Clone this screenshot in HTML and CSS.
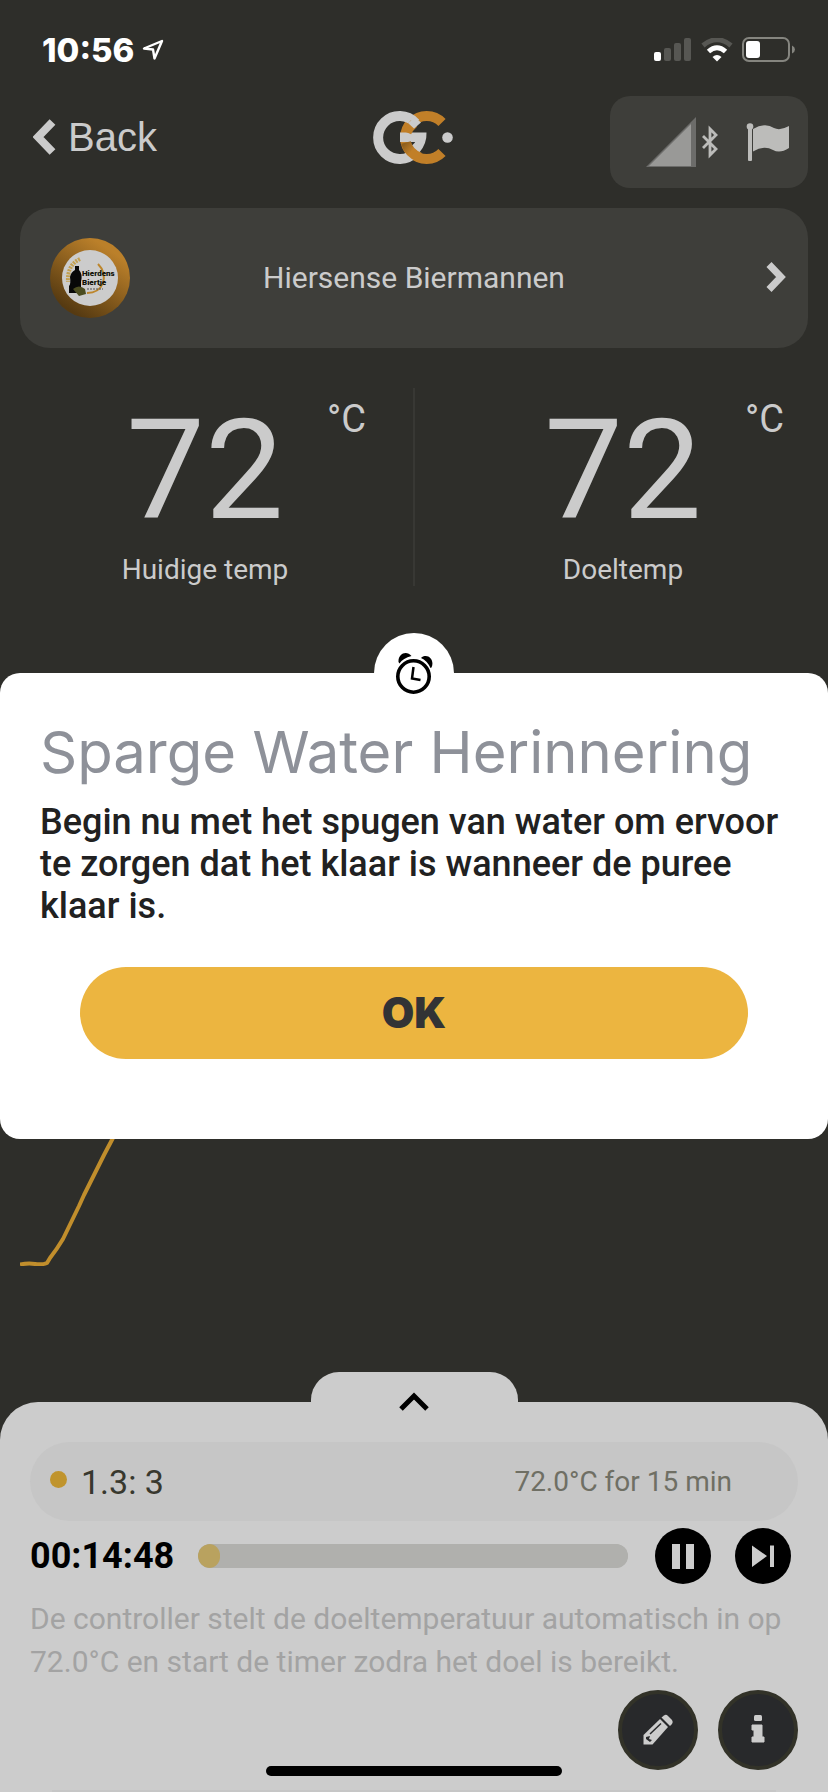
FILE: index.html
```html
<!DOCTYPE html>
<html lang="nl">
<head>
<meta charset="utf-8">
<meta name="viewport" content="width=device-width, initial-scale=1">
<title>Sparge Water Herinnering</title>
<link rel="stylesheet" href="styles.css">
</head>
<body>
<div class="screen">
  <div class="status">
    <div class="status-time">
      <span>10:56</span>
      <svg class="location" width="22" height="22" viewBox="0 0 22 22"><path d="M2 9.500L20 2L12.500 19.500L11 10.500Z" fill="none" stroke="#fff" stroke-width="2.400" stroke-linejoin="round"/></svg>
    </div>
    <div class="status-icons">
      <svg width="38" height="24" viewBox="0 0 38 24"><rect x="0" y="14" width="7" height="9" rx="2" fill="#fff"/><g fill="#575753"><rect x="10" y="10" width="7" height="13" rx="2"/><rect x="20" y="5" width="7" height="18" rx="2"/><rect x="30" y="0" width="7" height="23" rx="2"/></g></svg>
      <svg width="32" height="24" viewBox="0 0 32 24"><path d="M2 7.500Q16 -4 30 7.500" fill="none" stroke="#575753" stroke-width="5"/><path d="M7.500 13.500Q16 6 24.500 13.500" fill="none" stroke="#fff" stroke-width="5"/><path d="M16 23.500L11.500 19Q16 15 20.500 19Z" fill="#fff"/></svg>
      <svg width="54" height="26" viewBox="0 0 54 26"><rect x="1" y="1" width="46" height="23" rx="6" fill="none" stroke="#85857f" stroke-width="2"/><rect x="4" y="4" width="14" height="17" rx="3" fill="#fff"/><path d="M50 8.500Q53 10 53 12.500T50 16.500Z" fill="#85857f"/></svg>
    </div>
  </div>

  <header class="header">
    <a class="back" href="#">
      <svg width="24" height="38" viewBox="0 0 24 38"><path d="M19.500 4L5 19L19.500 34" fill="none" stroke="#cbcbcb" stroke-width="8"/></svg>
      <span>Back</span>
    </a>
    <svg class="logo" width="82" height="64" viewBox="0 0 82 64" role="img" aria-label="GC">
      <defs>
        <linearGradient id="shade" x1="0" y1="0" x2="1" y2="1"><stop offset="0" stop-color="#8f601f"/><stop offset=".5" stop-color="#c17f28"/></linearGradient>
      </defs>
      <path d="M69 12.500A21.500 21.500 0 1 0 69 42.500" fill="none" stroke="#c17f28" stroke-width="10"/>
      <path d="M42.500 13A21.500 21.500 0 1 0 42.500 42" fill="none" stroke="#cbcbcb" stroke-width="10"/>
      <path d="M27 22.500H53.500Q54 34 46 43L38 36Q42 33 42 32H27Z" fill="#cbcbcb"/>
      <path d="M33 32.500A21.500 21.500 0 0 0 47 47.500" fill="none" stroke="url(#shade)" stroke-width="10"/>
      <path d="M41 13.500Q36 18 34 22.500" fill="none" stroke="#c17f28" stroke-width="9"/>
      <path d="M42 7.500L48 12.500L41 18.500L35 13Z" fill="#cbcbcb"/>
      <circle cx="74.500" cy="27.500" r="5.300" fill="#cbcbcb"/>
    </svg>
    <div class="connection">
      <svg width="72" height="52" viewBox="0 0 72 52" role="img" aria-label="Bluetooth signaal"><path d="M0 51L50 1V51Z" fill="#6c6c6a"/><path d="M3 50L45 8V50Z" fill="#999997"/><path d="M57 20L70 33L64 39V13L70 19L57 32" fill="none" stroke="#bcbcba" stroke-width="2.800"/></svg>
      <svg width="44" height="38" viewBox="0 0 44 38" role="img" aria-label="Vlag"><circle cx="4" cy="3.500" r="3.300" fill="#bcbcba"/><rect x="2" y="4" width="4" height="34" rx="1" fill="#bcbcba"/><path d="M7 6Q19 -1 28 5Q34 8 43 3V25Q34 31 27 27Q18 22 7 28.500Z" fill="#bcbcba"/></svg>
    </div>
  </header>

  <button class="device" type="button">
    <svg class="device-badge" width="80" height="80" viewBox="0 0 80 80" aria-hidden="true">
      <defs><linearGradient id="gold" x1=".75" y1=".15" x2=".25" y2=".9"><stop offset="0" stop-color="#bb802a"/><stop offset="1" stop-color="#563a11"/></linearGradient></defs>
      <circle cx="40" cy="40" r="40" fill="url(#gold)"/>
      <circle cx="40" cy="40" r="28" fill="#cccccc"/>
      <path d="M48 26Q56 34 53 45Q49 55 37 55" fill="none" stroke="#bd862c" stroke-width="2"/>
      <path d="M30 21Q17 27 18 44" fill="none" stroke="#c3a050" stroke-width="4" stroke-dasharray="2 1"/>
      <path d="M25 28L29 28L29 32Q33 36 31 44V55H19V48Q21 46 20 39Q21 34 25 32Z" fill="#080808"/>
      <path d="M23 51Q29 46 35 51L36 56L29 58Z" fill="#4b4c20"/>
      <g class="badge-text"><text x="32" y="38">Hierdens</text><text x="32" y="47">Biertje</text></g>
      <path d="M37 51H53" stroke="#555" stroke-width="1" stroke-dasharray="2 1"/>
    </svg>
    <span class="device-name">Hiersense Biermannen</span>
    <svg class="device-arrow" width="20" height="32" viewBox="0 0 20 32" aria-hidden="true"><path d="M3 2.500L15 15L3 27.500" fill="none" stroke="#cbcbcb" stroke-width="7"/></svg>
  </button>

  <section class="temps">
    <div class="temp">
      <div class="temp-value">72</div><div class="temp-unit">°C</div>
      <div class="temp-label">Huidige temp</div>
    </div>
    <div class="divider"></div>
    <div class="temp">
      <div class="temp-value">72</div><div class="temp-unit">°C</div>
      <div class="temp-label">Doeltemp</div>
    </div>
  </section>

  <div class="chart">
    <svg width="120" height="140" viewBox="0 0 120 140" role="img" aria-label="Temperatuurverloop"><path d="M0 138.500Q8 137 15 138T27 137L30 132Q37 123 43 113L59 80L64 69L80 37L84 29L94 10L99 0" fill="none" stroke="#c18e2c" stroke-width="4" stroke-linejoin="round"/></svg>
  </div>

  <section class="sheet">
    <button class="sheet-tab" type="button" aria-label="Openen"><svg width="30" height="20" viewBox="0 0 30 20"><path d="M2 17L15 4L28 17" fill="none" stroke="#000" stroke-width="5"/></svg></button>
    <div class="sheet-body">
      <div class="step">
        <span class="step-dot"></span>
        <span class="step-name">1.3: 3</span>
        <span class="step-info">72.0°C for 15 min</span>
      </div>
      <div class="controls">
        <span class="timer">00:14:48</span>
        <progress class="progress" max="100" value="5" aria-label="Voortgang"></progress>
        <div class="playback">
          <button class="play-button" type="button" aria-label="Pauze"><svg width="56" height="56" viewBox="0 0 56 56"><path d="M17 16H25V41H17ZM31 16H39V41H31Z" fill="#cccccc"/></svg></button>
          <button class="play-button" type="button" aria-label="Volgende"><svg width="56" height="56" viewBox="0 0 56 56"><path d="M17 17.500L32 28L17 39ZM35 17.500H39V39H35Z" fill="#cccccc"/></svg></button>
        </div>
      </div>
      <p class="description">De controller stelt de doeltemperatuur automatisch in op 72.0°C en start de timer zodra het doel is bereikt.</p>
      <div class="actions">
        <button class="round-button" type="button" aria-label="Bewerken"><svg width="32" height="32" viewBox="0 0 32 32"><path d="M1.500 21L18 5L26 13L10.500 30.500H1.500Z" fill="#cccccc"/><path d="M19.500 3.500L22 1.500Q24 0 26 2L30 6Q31.500 8 30 10L28 12Z" fill="#cccccc"/><path d="M8 20L19 9.500" stroke="#28292b" stroke-width="1.500"/><path d="M4 23L8 22L7 25L10 26L8 28L4 25Z" fill="#28292b"/></svg></button>
        <button class="round-button" type="button" aria-label="Informatie"><svg width="32" height="32" viewBox="0 0 32 32"><rect x="12" y="1" width="8" height="6" rx="1.500" fill="#cccccc"/><path d="M10 11H20V23H22V28H10V23H12V16H10Z" fill="#cccccc" stroke="#cccccc" stroke-linejoin="round"/></svg></button>
      </div>
      <div class="next-step"></div>
    </div>
  </section>
  <div class="home-indicator"></div>
</div>

<div class="overlay">
  <div class="dialog" role="dialog" aria-labelledby="dialog-title">
    <div class="dialog-icon">
      <svg width="40" height="44" viewBox="0 0 40 44" aria-hidden="true"><circle cx="19.500" cy="25.500" r="15.700" fill="#fff" stroke="#000" stroke-width="3.600"/><path d="M19.500 16L18 27.500L26.500 29" fill="none" stroke="#000" stroke-width="2.500"/><path d="M4.500 11C4 2 13 -1 17.500 5Q9 7 5.500 12.500ZM27.500 6.500C34 2 41 9 37.500 16.500L36.500 17Q33 9.500 27 7Z" fill="#000"/></svg>
    </div>
    <h1 class="dialog-title" id="dialog-title">Sparge Water Herinnering</h1>
    <p class="dialog-text">Begin nu met het spugen van water om ervoor te zorgen dat het klaar is wanneer de puree klaar is.</p>
    <button class="dialog-ok" type="button">OK</button>
  </div>
</div>
</body>
</html>
```
FILE: styles.css
```css
* { box-sizing: border-box; }
body {
  margin: 0;
  background: #2e2e2a;
  color: #cbcbcb;
  font-family: Roboto, "Liberation Sans", sans-serif;
}
button { border: 0; padding: 0; color: inherit; font-family: inherit; cursor: pointer; }
svg { display: block; flex: none; }

.screen {
  position: relative;
  display: flex;
  flex-direction: column;
  min-height: 100vh;
}

.status {
  display: flex;
  justify-content: space-between;
  align-items: center;
  height: 96px;
  padding: 4px 32px 0 42px;
}
.status-time {
  display: flex;
  align-items: center;
  gap: 8px;
  color: #fff;
  font: 800 33px/40px Inter, sans-serif;
}
.status-icons { display: flex; align-items: center; gap: 9px; }

.header {
  display: grid;
  grid-template-columns: 1fr auto 1fr;
  align-items: center;
  padding: 0 20px;
}
.back {
  display: flex;
  align-items: center;
  gap: 11px;
  padding: 0 0 10px 13px;
  color: #cbcbcb;
  font: 40px/48px "Liberation Sans", sans-serif;
  text-decoration: none;
}
.connection {
  display: flex;
  align-items: center;
  justify-self: end;
  gap: 28px;
  height: 92px;
  padding: 0 18px 0 36px;
  border-radius: 20px;
  background: #3e3e3a;
}

.device {
  display: grid;
  grid-template-columns: 1fr auto 1fr;
  align-items: center;
  height: 140px;
  margin: 20px 20px 40px;
  padding: 0 22px;
  border-radius: 30px;
  background: #3e3e3a;
}
.device-badge { margin-left: 8px; }
.device-name { font-size: 30px; line-height: 36px; }
.device-arrow { justify-self: end; }
.badge-text { font: 900 8px Roboto, sans-serif; fill: #101005; }

.temps {
  display: grid;
  grid-template-columns: 1fr 2px 1fr;
  gap: 3px;
}
.divider { background: #383834; }
.temp {
  display: grid;
  grid-template-columns: 1fr auto 1fr;
  row-gap: 14px;
  padding-top: 12px;
}
.temp-value { grid-column: 2; font-size: 140px; line-height: 140px; }
.temp-unit {
  grid-column: 3;
  justify-self: end;
  padding-right: 44px;
  font-size: 38px;
  line-height: 38px;
}
.temp-label {
  grid-column: 1 / -1;
  text-align: center;
  font-size: 28px;
  line-height: 32px;
}

.chart {
  display: flex;
  flex: 1;
  align-items: flex-end;
  padding: 0 20px 106px;
}

.sheet { display: flex; flex-direction: column; align-items: center; }
.sheet-tab {
  display: grid;
  place-items: center;
  z-index: 1;
  width: 25%;
  height: 60px;
  margin-bottom: -30px;
  border-radius: 28px 28px 0 0;
  background: #cccccc;
}
.sheet-body {
  width: 100%;
  padding: 40px 30px 0;
  border-radius: 38px 38px 0 0;
  background: #cccccc;
}
.step {
  display: flex;
  align-items: center;
  height: 79px;
  padding: 0 66px 0 20px;
  border-radius: 40px;
  background: #c6c6c6;
}
.step-dot { width: 17px; height: 17px; margin-bottom: 4px; border-radius: 50%; background: #c0942d; }
.step-name { flex: 1; padding-left: 14px; color: #38382e; font-size: 34px; line-height: 40px; }
.step-info { color: #6f6f64; font-size: 28px; line-height: 32px; }

.controls { display: flex; align-items: center; gap: 24px; padding: 7px 7px 0 0; }
.timer { color: #000; font-size: 36px; font-weight: 700; line-height: 40px; }
.progress {
  flex: 1;
  min-width: 0;
  height: 24px;
  appearance: none;
  border: 0;
  border-radius: 12px;
  overflow: hidden;
  background: #b0b0ad;
}
.progress::-webkit-progress-bar { border-radius: 12px; background: #b0b0ad; }
.progress::-webkit-progress-value { border-radius: 12px; background: #b9a25f; }
.playback { display: flex; gap: 24px; padding-left: 3px; }
.play-button { width: 56px; height: 56px; border-radius: 50%; background: #000; }

.description { margin: 13px 0 7px; color: #a3a3a3; font-size: 30px; line-height: 43px; }
.actions { display: flex; justify-content: flex-end; gap: 20px; }
.round-button {
  display: grid;
  place-items: center;
  width: 80px;
  height: 80px;
  border: 4px solid #323228;
  border-radius: 50%;
  background: #28292b;
}
.next-step { height: 2px; margin: 20px 22px 0; background: #c6c6c6; }
.home-indicator {
  position: absolute;
  bottom: 16px;
  left: 50%;
  width: 296px;
  height: 10px;
  margin-left: -148px;
  border-radius: 5px;
  background: #000;
}

.overlay {
  position: absolute;
  inset: 0;
  z-index: 2;
  display: flex;
  align-items: center;
  padding-top: 20px;
}
.dialog {
  position: relative;
  width: 100%;
  padding: 47px 40px 80px;
  border-radius: 20px;
  background: #fff;
}
.dialog-icon {
  position: absolute;
  top: -40px;
  left: 50%;
  display: grid;
  place-items: center;
  width: 80px;
  height: 80px;
  margin-left: -40px;
  border-radius: 50%;
  background: #fff;
}
.dialog-title {
  margin: 0 0 17px;
  color: #8e9199;
  font: 400 58px/64px Inter, sans-serif;
}
.dialog-text {
  margin: 0 0 40px;
  color: #212121;
  font-size: 36px;
  font-weight: 500;
  line-height: 42px;
}
.dialog-ok {
  display: block;
  width: calc(100% - 80px);
  height: 92px;
  margin: 0 auto;
  border-radius: 46px;
  background: #ecb540;
  color: #323335;
  font: 900 42px/48px Inter, sans-serif;
}
```
